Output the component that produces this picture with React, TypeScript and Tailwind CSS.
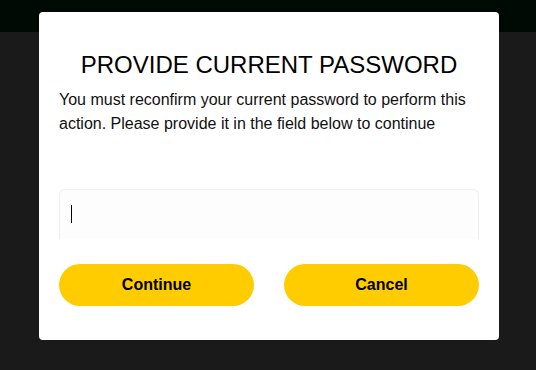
export default function App() {
  return (
    <div className="relative h-[370px] w-[536px] overflow-hidden bg-[#1a1a1a] font-['Liberation_Sans',Arial,sans-serif]">
      <div className="h-[32px] w-full bg-[#000a05]" />
      <div className="absolute left-[39px] top-[12px] flex h-[328px] w-[460px] flex-col rounded-[4px] bg-white px-[20px]">
        <h2 className="mt-[39px] text-center text-[24px] leading-[28px] text-black">PROVIDE CURRENT PASSWORD</h2>
        <p className="mt-[9px] text-[16px] leading-[24px] text-[#111]">
          You must reconfirm your current password to perform this action. Please provide it in the field below to
          continue
        </p>
        <div className="mt-[53px] flex h-[50px] items-start rounded-t-[6px] border border-b-0 border-[#efefef] bg-[#fdfdfd] pl-[11px] pt-[15px]">
          <div className="h-[18px] w-px bg-black" />
        </div>
        <div className="mt-[25px] flex gap-[30px]">
          <button className="h-[42px] flex-1 rounded-full bg-[#ffcc00] text-[16px] font-bold text-black">Continue</button>
          <button className="h-[42px] flex-1 rounded-full bg-[#ffcc00] text-[16px] font-bold text-black">Cancel</button>
        </div>
      </div>
    </div>
  );
}
